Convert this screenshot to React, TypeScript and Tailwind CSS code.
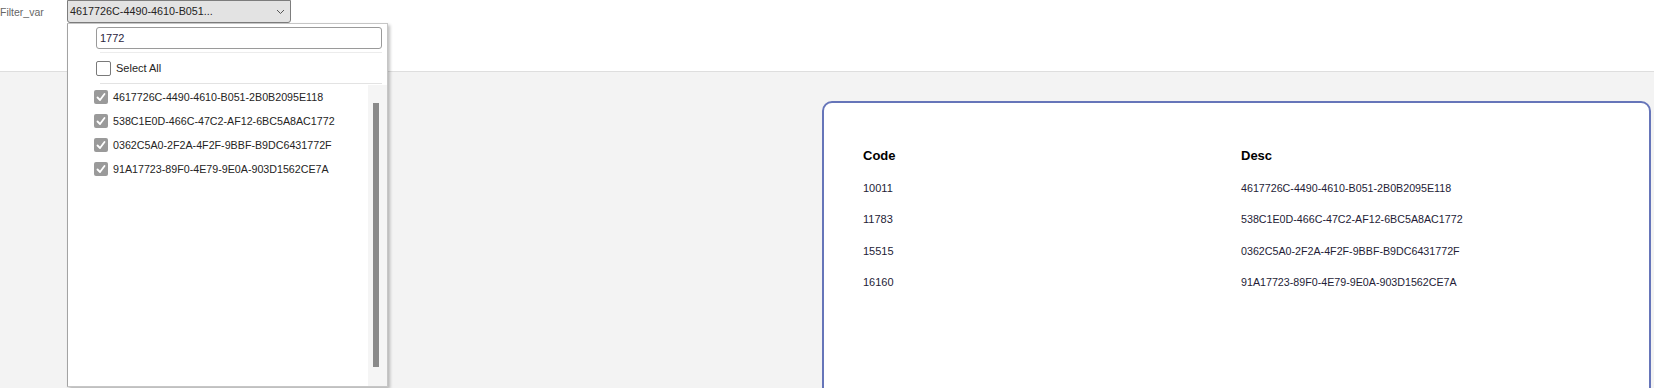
import * as React from "react"

const ITEMS = [
  { code: "10011", desc: "4617726C-4490-4610-B051-2B0B2095E118" },
  { code: "11783", desc: "538C1E0D-466C-47C2-AF12-6BC5A8AC1772" },
  { code: "15515", desc: "0362C5A0-2F2A-4F2F-9BBF-B9DC6431772F" },
  { code: "16160", desc: "91A17723-89F0-4E79-9E0A-903D1562CE7A" },
]

function CheckedBox() {
  return (
    <span className="flex h-[14px] w-[14px] shrink-0 items-center justify-center rounded-[2px] bg-[#9a9a9a]">
      <svg width="10" height="10" viewBox="0 0 10 10" fill="none">
        <polyline
          points="1.5,5.5 4,8 8.5,2"
          stroke="white"
          strokeWidth="1.8"
          strokeLinecap="round"
          strokeLinejoin="round"
        />
      </svg>
    </span>
  )
}

function Dropdown() {
  return (
    <div className="absolute left-0 top-[23px] z-10 flex h-[364px] w-[321px] flex-col border border-[#c6c6c6] border-l-[#a3a3a3] bg-white shadow-[2px_2px_3px_rgba(0,0,0,0.25)]">
      {/* search box */}
      <div className="ml-[28px] mt-[3px] flex h-[22px] w-[286px] items-center rounded-[3px] border border-[#9a9a9a] pl-[3px] text-[11px] text-[#2b2540]">
        1772
      </div>
      <div className="ml-[32px] mt-[3px] h-px w-[282px] bg-[#ececec]" />

      {/* select all */}
      <div className="ml-[28px] mt-[8px] flex h-[15px] items-center gap-[5px]">
        <span className="h-[15px] w-[15px] rounded-[2px] border border-[#7a7a7a] bg-white" />
        <span className="text-[11px] text-[#252423]">Select All</span>
      </div>
      <div className="ml-[32px] mt-[7px] h-px w-[282px] bg-[#e3e3e3]" />

      {/* list + scrollbar */}
      <div className="flex flex-1">
        <ul className="flex-1 pt-px">
          {ITEMS.map((it) => (
            <li key={it.code} className="flex h-[24px] items-center gap-[5px] pl-[26px]">
              <CheckedBox />
              <span className="text-[10.7px] text-[#252423]">{it.desc}</span>
            </li>
          ))}
        </ul>
        <div className="mt-px w-[19px] bg-[#f5f5f5] pt-[18px]">
          <div className="ml-[5px] h-[264px] w-[6px] bg-[#8a8a8a]" />
        </div>
      </div>
    </div>
  )
}

export default function App() {
  return (
    <div className="h-[388px] overflow-hidden bg-[#f3f3f3] font-['Liberation_Sans',Arial,sans-serif]">
      <header className="flex h-[72px] items-start border-b border-[#dedede] bg-white">
        <span className="w-[67px] pt-[5px] text-[10.5px] text-[#666666]">Filter_var</span>
        <div className="relative">
          <div className="flex h-[23px] w-[224px] items-center justify-between rounded-b-[3px] border border-[#7d7d7d] bg-[#e3e3e3] pl-[2px] pr-[5px]">
            <span className="text-[10.8px] text-[#252423]">4617726C-4490-4610-B051...</span>
            <svg width="9" height="6" viewBox="0 0 9 6" fill="none">
              <polyline points="1,1 4.5,4.5 8,1" stroke="#555" strokeWidth="1" />
            </svg>
          </div>
          <Dropdown />
        </div>
      </header>

      <main className="pl-[822px] pt-[29px]">
        <div className="h-[320px] w-[829px] rounded-[10px] border-2 border-[#6675b9] bg-white pl-[39px] pt-[37px]">
          <div className="grid grid-cols-[378px_1fr]">
            <div className="flex h-[32px] items-center text-[13px] font-semibold text-black">Code</div>
            <div className="flex h-[32px] items-center text-[13px] font-bold text-black">Desc</div>
            {ITEMS.map((it) => (
              <React.Fragment key={it.code}>
                <div className="flex h-[31.5px] items-center text-[11px] text-[#241c36]">{it.code}</div>
                <div className="flex h-[31.5px] items-center text-[10.7px] text-[#241c36]">{it.desc}</div>
              </React.Fragment>
            ))}
          </div>
        </div>
      </main>
    </div>
  )
}
